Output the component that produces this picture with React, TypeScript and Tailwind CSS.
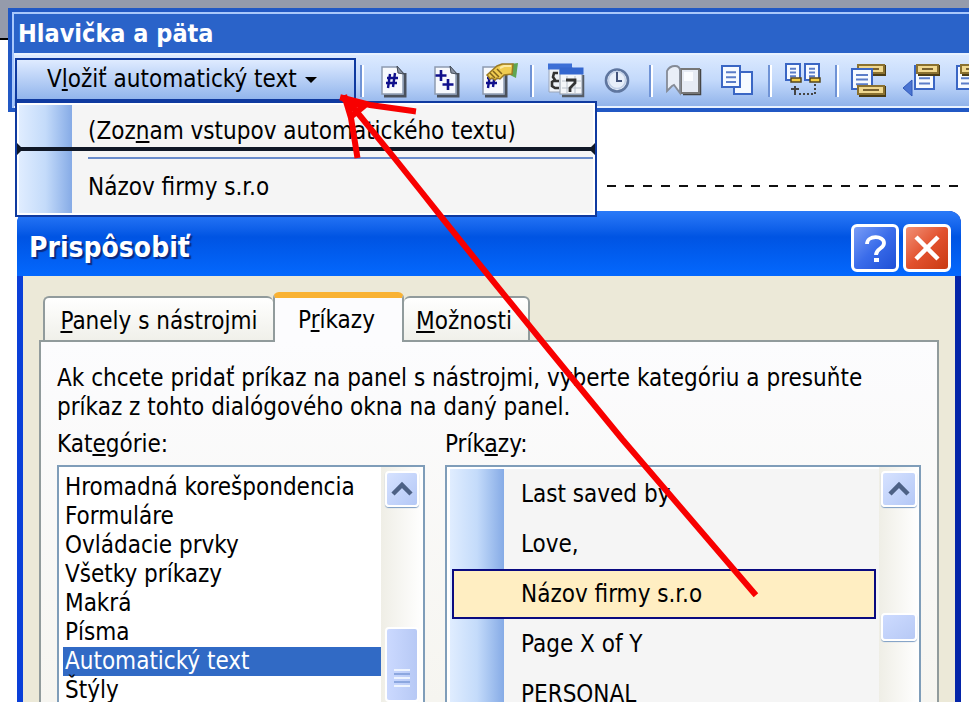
import type { ReactNode } from 'react'
import clsx from 'clsx'

const categories = [
  'Hromadná korešpondencia',
  'Formuláre',
  'Ovládacie prvky',
  'Všetky príkazy',
  'Makrá',
  'Písma',
  'Automatický text',
  'Štýly',
]

const commands = ['Last saved by', 'Love,', 'Názov firmy s.r.o', 'Page X of Y', 'PERSONAL']

function Icon({ children }: { children: ReactNode }) {
  return (
    <svg className="h-9 w-10" viewBox="0 0 40 36" fill="none" aria-hidden="true">
      {children}
    </svg>
  )
}

function Sheet({ x }: { x: number }) {
  return (
    <g transform={`translate(${x} 0)`}>
      <path d="M3 33h21V10" stroke="#4a515c" strokeWidth="3" />
      <path d="M1 4h15l6 6v21H1z" fill="#f7f9fd" stroke="#8d9ab0" strokeWidth="1.5" />
      <path d="M16 3l1 7 6 1z" fill="#8b94a3" stroke="#444c58" />
    </g>
  )
}

function Hash({ x }: { x: number }) {
  return (
    <path
      d={`M${x + 4} 11l-2 14M${x + 9} 10l-2 14M${x + 1} 15h11M${x} 20h11`}
      stroke="#10108c"
      strokeWidth="2.4"
    />
  )
}

function LinedPage({ x, y, w = 20, h = 24 }: { x: number; y: number; w?: number; h?: number }) {
  return (
    <g>
      <rect x={x} y={y} width={w} height={h} fill="#f6faff" stroke="#3a66c4" strokeWidth="2" />
      <path
        d={`M${x + 4} ${y + h * 0.3}h${w - 8}M${x + 4} ${y + h * 0.53}h${w - 8}M${x + 4} ${y + h * 0.76}h${w - 8}`}
        stroke="#5b7dc8"
        strokeWidth="2"
      />
    </g>
  )
}

function Strip({ x, y, w = 24 }: { x: number; y: number; w?: number }) {
  return (
    <g>
      <path d={`M${x + 1} ${y + 10}h${w}V${y}`} stroke="#4a3c14" strokeWidth="2" />
      <rect x={x} y={y} width={w} height="8" fill="#f0d88f" stroke="#8a7130" strokeWidth="2" />
      <path d={`M${x + 5} ${y + 4}h${w - 10}`} stroke="#7a6330" strokeWidth="2" />
    </g>
  )
}

const groups: { label: string; icon: ReactNode }[][] = [
  [
    {
      label: 'Vložiť číslo strany',
      icon: (
        <>
          <Sheet x={7} />
          <Hash x={12} />
        </>
      ),
    },
    {
      label: 'Vložiť počet strán',
      icon: (
        <>
          <Sheet x={8} />
          <path d="M15 7v11M9.500 12.500h11M22 16v11M16.500 21.500h11" stroke="#10108c" strokeWidth="2.6" />
        </>
      ),
    },
    {
      label: 'Formát čísla strany',
      icon: (
        <>
          <Sheet x={4} />
          <Hash x={8} />
          <path d="M32 1l8-1-2 15-6-3z" fill="#5fa552" />
          <path
            d="M9 12l10-9 5-2h11l-1 10-8 1-4 4-3-1-2 2-3-2-2 1-2-3z"
            fill="#f0cc50"
            stroke="#9a7a24"
            strokeWidth="1.500"
          />
          <path d="M12 10l5 5M15 8l6 6M19 6l5 5" stroke="#80621a" strokeWidth="1.500" />
          <path d="M22 5l4-2h7" stroke="#fbe9a2" strokeWidth="2" />
        </>
      ),
    },
  ],
  [
    {
      label: 'Vložiť dátum',
      icon: (
        <>
          <path d="M4 4h23v25H4z" fill="#eef2f8" stroke="#9aa5b8" />
          <path d="M3 0.500h24v6H3z" fill="#3c6fd6" />
          <path d="M13 10H9l-1 4 2 3-3 2v4l3 2h4M8 18h6" stroke="#333" strokeWidth="2.600" />
          <path d="M17 33h21V12" stroke="#555c66" strokeWidth="2.500" />
          <rect x="15" y="6" width="22" height="25" fill="#f4f6f9" stroke="#8f99a8" />
          <path d="M14.500 4.500h24v7h-24z" fill="#3467cf" />
          <path d="M17 18h19M17 25h19M22 13v17M30 13v17" stroke="#b9c0ca" />
          <path d="M21 17h9v3l-5 5v4" stroke="#333" strokeWidth="2.800" />
        </>
      ),
    },
    {
      label: 'Vložiť čas',
      icon: (
        <>
          <circle cx="20" cy="17.500" r="11" fill="#e8effa" stroke="#5f769f" strokeWidth="2.600" />
          <circle cx="20" cy="17" r="8.500" stroke="#c3d1e8" strokeWidth="1.500" />
          <path d="M20 9v9h5" stroke="#43537a" strokeWidth="2" />
        </>
      ),
    },
  ],
  [
    {
      label: 'Nastavenie strany',
      icon: (
        <>
          <path d="M19 31h17V6" stroke="#454545" strokeWidth="2.500" />
          <path d="M17 6h18v24H17z" fill="#e6ebf4" stroke="#777" strokeWidth="2" />
          <path d="M20 9h9v9h-9z" fill="#fafcff" />
          <path d="M3 8c2-4 5-5 8-5 3 0 5 2 5 5v22l-6-8-2 1-5 5z" fill="#e9eef7" stroke="#858b96" strokeWidth="1.800" />
        </>
      ),
    },
    {
      label: 'Zobraziť alebo skryť text dokumentu',
      icon: (
        <>
          <path d="M18 9h18v22H18z" fill="#f6faff" stroke="#3a66c4" strokeWidth="2" />
          <LinedPage x={6} y={3} w={18} h={21} />
        </>
      ),
    },
  ],
  [
    {
      label: 'Rovnaké ako predchádzajúce',
      icon: (
        <>
          <LinedPage x={3} y={1} w={14} h={16} />
          <LinedPage x={22} y={1} w={14} h={16} />
          <path d="M8 15h10v4H8zM27 15h10v4H27z" fill="#f4cd45" stroke="#54451c" strokeWidth="1.500" />
          <path d="M12 23v9M8 26h8" stroke="#444" strokeWidth="2" />
          <path d="M16 31h16V20" stroke="#444" strokeWidth="2" strokeDasharray="2 2" />
        </>
      ),
    },
  ],
  [
    {
      label: 'Prepnúť medzi hlavičkou a pätou',
      icon: (
        <>
          <Strip x={8} y={2} w={26} />
          <LinedPage x={2} y={6} h={20} />
          <Strip x={8} y={23} w={26} />
        </>
      ),
    },
    {
      label: 'Zobraziť predchádzajúce',
      icon: (
        <>
          <LinedPage x={13} y={3} w={19} h={23} />
          <Strip x={15} y={2} w={21} />
          <path d="M10 17v16l-9-8z" fill="#4a74d2" stroke="#3058b8" />
        </>
      ),
    },
    {
      label: 'Zobraziť nasledujúce',
      icon: (
        <>
          <LinedPage x={3} y={3} w={18} h={23} />
          <Strip x={7} y={2} w={21} />
        </>
      ),
    },
  ],
]

function Separator({ className = 'w-[15px]' }: { className?: string }) {
  return (
    <div className={clsx('flex h-8 shrink-0 justify-center', className)}>
      <span className="w-0.5 bg-[#6f93d6]" />
      <span className="w-0.5 bg-white" />
    </div>
  )
}

function ScrollUp() {
  return (
    <button
      type="button"
      aria-label="Posunúť nahor"
      className="flex h-9 w-full shrink-0 items-center justify-center rounded border-2 border-white bg-linear-to-br from-[#d6e2ff] to-[#b4c8f6] shadow-[0_1px_1px_#7b9cc4]"
    >
      <svg className="h-4 w-6" viewBox="0 0 24 16" fill="none" aria-hidden="true">
        <path d="M3 13l9-9 9 9" stroke="#4d6185" strokeWidth="4.500" />
      </svg>
    </button>
  )
}

function AutoTextMenu() {
  return (
    <div
      role="menu"
      className="absolute top-full left-0 z-10 -mt-0.5 w-[582px] border-2 border-[#0f3aa0] bg-[#f5f5f5]"
    >
      <div className="flex border-2 border-white">
        <div className="w-[53px] shrink-0 bg-linear-to-r from-[#e0edff] via-[#c4dbfa] to-[#86abe6]" />
        <div className="flex grow flex-col pl-4">
          <button type="button" role="menuitem" className="h-[52px] text-left whitespace-nowrap">
            (Zoz<u>n</u>am vstupov automatického textu)
          </button>
          <div className="h-0.5 bg-[#6a8ccb]" />
          <button type="button" role="menuitem" className="h-[54px] pt-0.5 text-left whitespace-nowrap">
            Názov firmy s.r.o
          </button>
        </div>
      </div>
      {/* insertion marker for the dragged command */}
      <svg className="absolute top-10 left-0 h-3 w-full" viewBox="0 0 578 12" fill="none" aria-hidden="true">
        <path d="M0 6h578" stroke="#101827" strokeWidth="4" />
        <path d="M0 0l6 6-6 6zM578 0l-6 6 6 6z" fill="#101827" />
      </svg>
    </div>
  )
}

function Toolbar() {
  return (
    <section className="relative z-10 ml-2 border-4 border-r-0 border-[#2158c4] bg-[#2a63c9]">
      <div className="border-t-2 border-l-2 border-[#a9c8fb]">
        <h1 className="flex h-[39px] items-center pl-1 text-[25px] font-bold text-white">Hlavička a päta</h1>
        <div className="flex h-[55px] items-center border-y-2 border-[#e8f2ff] bg-linear-to-b from-[#dceaff] via-[#c3d9fb] to-[#91b3ea] pl-px">
          <div className="relative w-[341px] shrink-0">
            <button
              type="button"
              aria-haspopup="menu"
              className="flex h-[45px] w-full items-center gap-2 border-2 border-b-4 border-[#0f3aa0] bg-linear-to-b from-[#dfebff] to-[#92b5ec] pl-[30px] whitespace-nowrap"
            >
              <span>
                V<u>l</u>ožiť automatický text
              </span>
              <svg className="h-2 w-3" viewBox="0 0 12 8" aria-hidden="true">
                <path d="M0 1h12L6 7z" fill="#000" />
              </svg>
            </button>
            <AutoTextMenu />
          </div>
          <Separator className="w-3" />
          {groups.map((group, index) => (
            <div key={group[0].label} className="flex shrink-0 items-center">
              {index > 0 && <Separator />}
              {group.map((tool) => (
                <button
                  key={tool.label}
                  type="button"
                  aria-label={tool.label}
                  className="flex w-[52px] justify-center"
                >
                  <Icon>{tool.icon}</Icon>
                </button>
              ))}
            </div>
          ))}
        </div>
      </div>
    </section>
  )
}

function CategoryList() {
  return (
    <div className="flex w-[368px] shrink-0 flex-col">
      <h3 className="h-[35px] shrink-0">
        Kat<u>e</u>górie:
      </h3>
      <div className="flex min-h-0 grow overflow-hidden border-2 border-b-0 border-[#7f9db9] bg-white">
        <div role="listbox" aria-label="Kategórie" className="grow pt-1.5 pl-1">
          {categories.map((name) => (
            <button
              key={name}
              type="button"
              role="option"
              aria-selected={name === 'Automatický text'}
              className={clsx(
                'block w-full pl-0.5 text-left whitespace-nowrap',
                name === 'Automatický text' && 'bg-[#316ac5] text-white',
              )}
            >
              {name}
            </button>
          ))}
        </div>
        <div className="flex w-[42px] shrink-0 flex-col bg-linear-to-r from-[#efeee6] to-white px-1 pt-1">
          <ScrollUp />
          <div className="mt-[120px] flex h-32 flex-col items-center gap-0.5 rounded border-2 border-white bg-linear-to-r from-[#cbd9ff] to-[#b7c9f5] pt-10">
            <span className="h-0.5 w-4 bg-[#eef4fe]" />
            <span className="h-0.5 w-4 bg-[#8ca7df]" />
            <span className="h-0.5 w-4 bg-[#eef4fe]" />
            <span className="h-0.5 w-4 bg-[#8ca7df]" />
            <span className="h-0.5 w-4 bg-[#eef4fe]" />
          </div>
        </div>
      </div>
    </div>
  )
}

function CommandList() {
  return (
    <div className="flex grow flex-col">
      <h3 className="h-[35px] shrink-0">
        Prík<u>a</u>zy:
      </h3>
      <div className="flex min-h-0 grow overflow-hidden border-2 border-b-0 border-[#7f9db9] bg-white pl-[3px]">
        <div
          role="listbox"
          aria-label="Príkazy"
          className="mt-0.5 grow bg-[#f5f5f5] bg-linear-to-r from-[#e0edff] via-[#c4dbfa] to-[#86abe6] bg-size-[54px_100%] bg-no-repeat"
        >
          {commands.map((name) => (
            <button
              key={name}
              type="button"
              role="option"
              aria-selected={name === 'Názov firmy s.r.o'}
              className={clsx(
                'ml-0.5 block h-[50px] w-[424px] border-2 pl-[67px] text-left whitespace-nowrap',
                name === 'Názov firmy s.r.o' ? 'border-[#0a0a80] bg-[#ffeec2]' : 'border-transparent',
              )}
            >
              {name}
            </button>
          ))}
        </div>
        <div className="flex w-10 shrink-0 flex-col bg-linear-to-r from-[#efeee6] to-white px-0.5 pt-1">
          <ScrollUp />
          <div className="mt-[106px] h-7 rounded border-2 border-white bg-linear-to-br from-[#cddbff] to-[#b7c9f5] shadow-[0_1px_1px_#7b9cc4]" />
        </div>
      </div>
    </div>
  )
}

function CustomizeDialog() {
  return (
    <section className="mr-2 ml-[17px] flex min-h-0 grow flex-col overflow-hidden rounded-t-xl bg-linear-to-r from-[#0a3fd8] via-[#0a5cf5] to-[#0424a8] px-1.5">
      <header className="-mx-1.5 flex h-[65px] shrink-0 items-center gap-1 bg-linear-to-b from-[#2a7af8] via-[#0054e3] via-40% to-[#0468fe] pt-2 pr-2.5 pl-3 text-white">
        <h2 className="grow text-[28px] font-bold [text-shadow:2px_2px_1px_#0a2a80]">Prispôsobiť</h2>
        <button
          type="button"
          aria-label="Pomocník"
          className="flex size-12 items-center justify-center rounded-md border-[3px] border-white bg-linear-to-br from-[#7a9cf5] via-[#3a6cea] to-[#1f4fd6]"
        >
          <svg className="size-8" viewBox="0 0 32 32" fill="none" aria-hidden="true">
            <path d="M8 12c0-9 17-9 17-1 0 6-8 5-8 12" stroke="#fff" strokeWidth="3.800" />
            <path d="M15 26h5v4h-5z" fill="#fff" />
          </svg>
        </button>
        <button
          type="button"
          aria-label="Zavrieť"
          className="flex size-12 items-center justify-center rounded-md border-[3px] border-white bg-linear-to-br from-[#f08f75] via-[#e2512d] to-[#c93a10]"
        >
          <svg className="size-8" viewBox="0 0 32 32" fill="none" aria-hidden="true">
            <path d="M5 5l22 22M27 5L5 27" stroke="#fff" strokeWidth="4.500" />
          </svg>
        </button>
      </header>

      <div className="flex min-h-0 grow flex-col bg-[#ece9d8] px-4 pt-4">
        <div role="tablist" className="relative z-10 -mb-0.5 flex items-end pl-1">
          <button
            type="button"
            role="tab"
            className="h-[46px] w-[230px] rounded-t-md border-2 border-r-0 border-[#919b9c] bg-linear-to-b from-white to-[#f0f0ea] pt-1 whitespace-nowrap"
          >
            <u>P</u>anely s nástrojmi
          </button>
          <button
            type="button"
            role="tab"
            aria-selected="true"
            className="h-[50px] w-[131px] rounded-t-md border-x-2 border-t-[6px] border-x-[#919b9c] border-t-[#f9b233] bg-[#fcfcfe] pr-1"
          >
            P<u>r</u>íkazy
          </button>
          <button
            type="button"
            role="tab"
            className="h-[46px] w-[126px] rounded-t-md border-2 border-l-0 border-[#919b9c] bg-linear-to-b from-white to-[#f0f0ea] pt-1 pr-1"
          >
            <u>M</u>ožnosti
          </button>
        </div>
        <div
          role="tabpanel"
          className="flex min-h-0 grow flex-col border-2 border-b-0 border-[#919b9c] bg-linear-to-b from-[#fcfcfe] to-[#f6f5f0] px-4 pt-[22px]"
        >
          <p className="whitespace-nowrap">
            Ak chcete pridať príkaz na panel s nástrojmi, vyberte kategóriu a presuňte
            <br />
            príkaz z tohto dialógového okna na daný panel.
          </p>
          <div className="mt-2 flex min-h-0 grow gap-5">
            <CategoryList />
            <CommandList />
          </div>
        </div>
      </div>
    </section>
  )
}

export default function App() {
  return (
    <main className="relative flex h-screen flex-col overflow-hidden bg-white font-['DejaVu_Sans_Condensed','Noto_Sans',sans-serif] text-[24px] leading-[29px] text-black">
      <div className="-mb-8 h-10 shrink-0 border-b-2 border-black bg-[#959bab]" />
      <Toolbar />
      <div className="flex h-[99px] shrink-0 items-end justify-end pr-1.5 pb-6">
        <svg className="h-0.5 w-[356px]" viewBox="0 0 356 2" aria-hidden="true">
          <path d="M0 1h356" stroke="#111" strokeWidth="2" strokeDasharray="9 9" />
        </svg>
      </div>
      <CustomizeDialog />
      <svg
        className="pointer-events-none absolute top-20 left-80 z-20 h-[540px] w-[460px]"
        viewBox="320 80 460 540"
        fill="none"
        aria-hidden="true"
      >
        <path
          d="M754 593L622 439 545 345 484 270 443 219 420 190 396 160 357 112 346 101M343 98l27 7 43 6M345 98l6 20 6 37M347 102l17 4-11 9"
          stroke="#f80000"
          strokeWidth="6"
          strokeLinecap="square"
        />
      </svg>
    </main>
  )
}
